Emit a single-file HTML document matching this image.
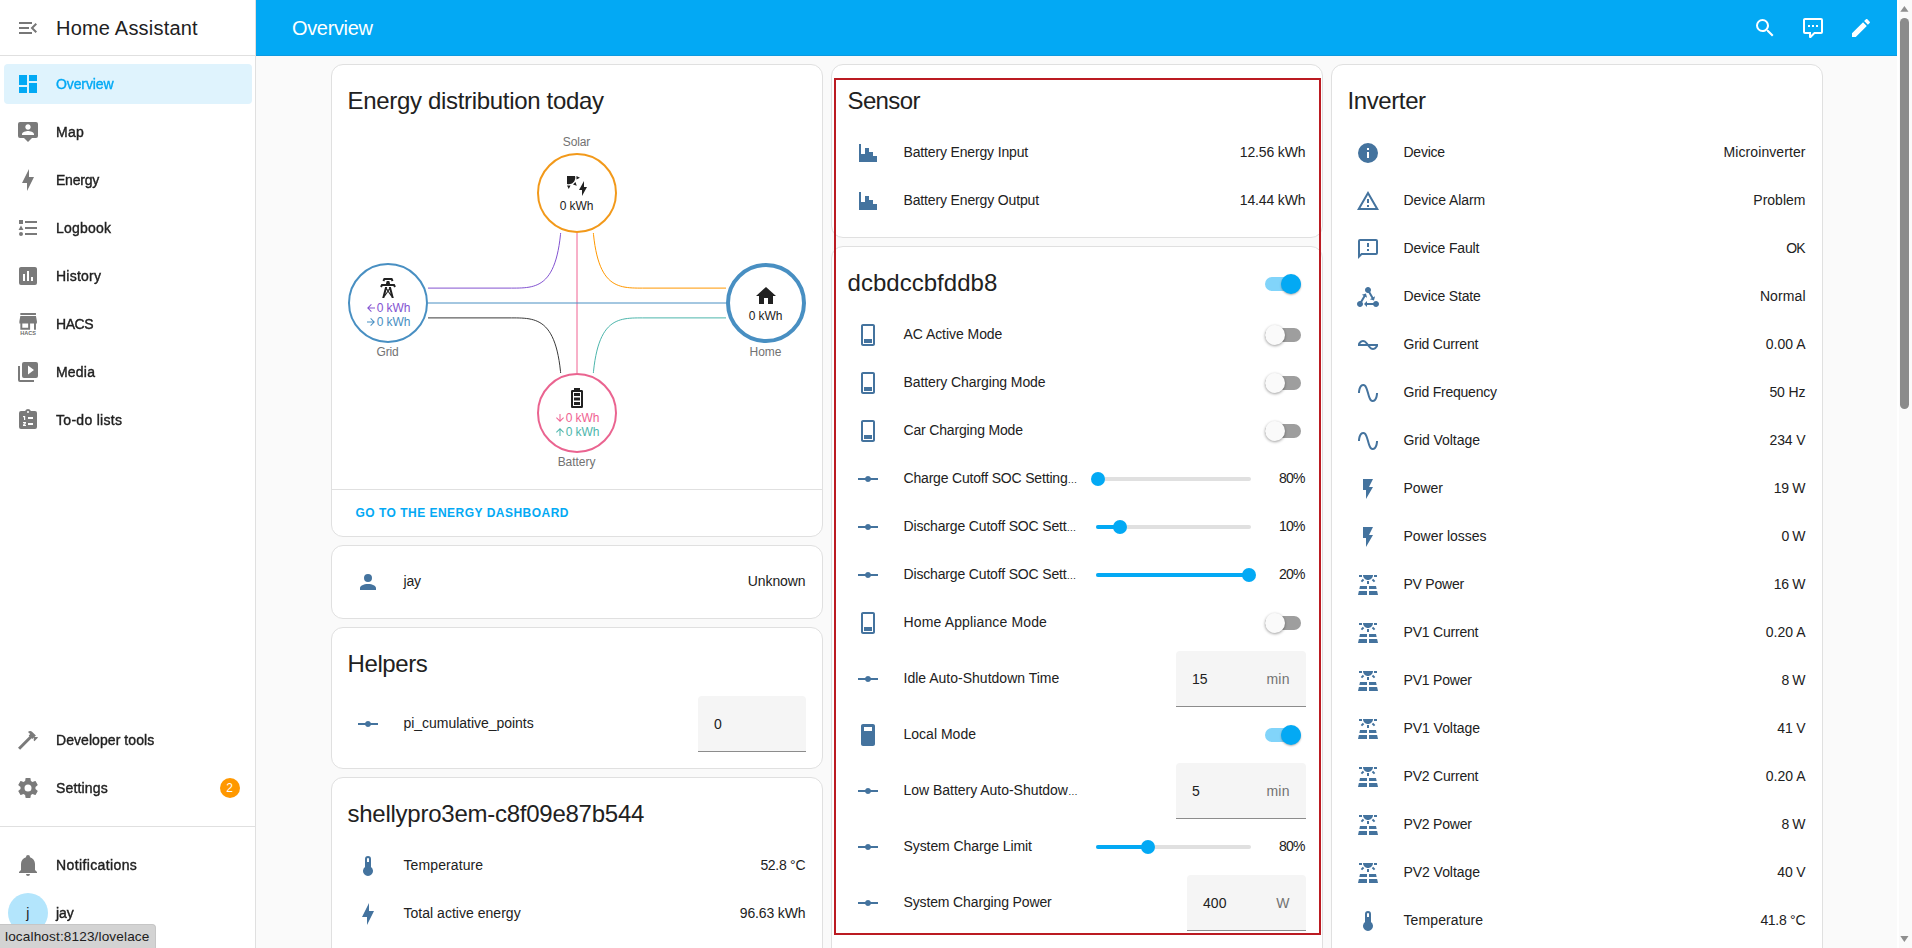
<!DOCTYPE html>
<html lang="en"><head><meta charset="utf-8"><title>Overview – Home Assistant</title>
<style>
html,body{margin:0;padding:0;}
body{width:1912px;height:948px;overflow:hidden;position:relative;background:#fafafa;font-family:"Liberation Sans", sans-serif;}
.g{display:contents;}
.g>div:not(.g),.g>svg,.g>span{position:absolute;display:block;}
.t{white-space:pre;font-family:"Liberation Sans", sans-serif;}
</style></head><body>
<main class="g" aria-label="Overview dashboard">
<section class="g" aria-label="Column 1">
<div style="left:330.5px;top:64px;width:492px;height:473px;background:#fff;border:1px solid #e0e0e0;border-radius:12px;box-sizing:border-box;"></div>
<span class="t" style="top:85.00px;font-size:24px;line-height:32px;color:#212121;letter-spacing:-0.319px;left:347.5px;">Energy distribution today</span>
<svg style="left:427.5px;top:233px" width="298" height="140" viewBox="0 0 100 100" preserveAspectRatio="xMidYMid slice" fill="none" stroke-width="1">
<path stroke="#8353d1" vector-effect="non-scaling-stroke" d="M45,0 v15 c0,30 -7.5,30 -17,30 h-33"/>
<path stroke="#ff9800" vector-effect="non-scaling-stroke" d="M55,0 v15 c0,30 7.5,30 17,30 h33"/>
<path stroke="#f06292" vector-effect="non-scaling-stroke" d="M50,0 V100"/>
<path stroke="#488fc2" vector-effect="non-scaling-stroke" d="M0,50 H100"/>
<path stroke="#3a3a3a" vector-effect="non-scaling-stroke" d="M45,100 v-15 c0,-30 -7.5,-30 -17,-30 h-33"/>
<path stroke="#4db6ac" vector-effect="non-scaling-stroke" d="M55,100 v-15 c0,-30 7.5,-30 17,-30 h33"/>
</svg>
<span class="t" style="top:134.60px;font-size:12px;line-height:14px;color:#727272;letter-spacing:-0.138px;left:562.84px;">Solar</span>
<div style="left:536.5px;top:153px;width:80px;height:80px;border:2px solid #f2991a;border-radius:50%;box-sizing:border-box;background:#fff;"></div>
<svg style="left:564.5px;top:174.0px;" width="24" height="24" viewBox="0 0 24 24"><path fill="#212121" fill-rule="nonzero" d="M11.45,2V5.55L15,3.77L11.45,2M10.45,8L8,10.46L11.75,11.71L10.45,8M2,11.45L3.77,15L5.55,11.45H2M10,2H2V10C2.57,10.17 3.17,10.25 3.77,10.25C7.35,10.26 10.26,7.35 10.27,3.75C10.26,3.16 10.17,2.57 10,2M17,22V16H14L19,7V13H22L17,22Z"/></svg>
<span class="t" style="top:198.60px;font-size:12px;line-height:14px;color:#212121;letter-spacing:-0.103px;left:559.75px;">0 kWh</span>
<div style="left:347.5px;top:263px;width:80px;height:80px;border:2px solid #488fc2;border-radius:50%;box-sizing:border-box;background:#fff;"></div>
<svg style="left:375.5px;top:275.7px;" width="24" height="24" viewBox="0 0 24 24"><path fill="#212121" fill-rule="nonzero" d="M8.28,5.45L6.5,4.55L7.76,2H16.23L17.5,4.55L15.72,5.44L15,4H9L8.28,5.45M18.62,8H14.09L13.3,5H10.7L9.91,8H5.38L4.1,10.55L5.89,11.44L6.62,10H17.38L18.1,11.45L19.89,10.56L18.62,8M17.77,22H15.7L15.46,21.1L12,15.9L8.53,21.1L8.3,22H6.23L9.12,11H11.19L10.83,12.35L12,14.1L13.16,12.35L12.81,11H14.88L17.77,22M11.4,15L10.5,13.65L9.32,18.13L11.4,15M14.68,18.12L13.5,13.64L12.6,15L14.68,18.12Z"/></svg>
<svg style="left:364.75px;top:301.5px;" width="12" height="12" viewBox="0 0 24 24"><path fill="#8353d1" fill-rule="nonzero" d="M20,11V13H8L13.5,18.5L12.08,19.92L4.16,12L12.08,4.08L13.5,5.5L8,11H20Z"/></svg>
<span class="t" style="top:301.00px;font-size:12px;line-height:14px;color:#8353d1;letter-spacing:-0.103px;left:376.75px;">0 kWh</span>
<svg style="left:364.75px;top:315.5px;" width="12" height="12" viewBox="0 0 24 24"><path fill="#488fc2" fill-rule="nonzero" d="M4,11V13H16L10.5,18.5L11.92,19.92L19.84,12L11.92,4.08L10.5,5.5L16,11H4Z"/></svg>
<span class="t" style="top:315.00px;font-size:12px;line-height:14px;color:#488fc2;letter-spacing:-0.103px;left:376.75px;">0 kWh</span>
<span class="t" style="top:345.00px;font-size:12px;line-height:14px;color:#727272;letter-spacing:-0.217px;left:376.60px;">Grid</span>
<div style="left:725.5px;top:263px;width:80px;height:80px;border:4px solid #488fc2;border-radius:50%;box-sizing:border-box;background:#fff;"></div>
<svg style="left:753.5px;top:283.7px;" width="24" height="24" viewBox="0 0 24 24"><path fill="#212121" fill-rule="nonzero" d="M10,20V14H14V20H19V12H22L12,3L2,12H5V20H10Z"/></svg>
<span class="t" style="top:308.50px;font-size:12px;line-height:14px;color:#212121;letter-spacing:-0.103px;left:748.75px;">0 kWh</span>
<span class="t" style="top:345.00px;font-size:12px;line-height:14px;color:#727272;letter-spacing:0.024px;left:749.44px;">Home</span>
<div style="left:536.5px;top:373px;width:80px;height:80px;border:2px solid #ea6490;border-radius:50%;box-sizing:border-box;background:#fff;"></div>
<svg style="left:564.5px;top:385.7px;" width="24" height="24" viewBox="0 0 24 24"><path fill="#212121" fill-rule="nonzero" d="M16,20H8V6H16M16.67,4H15V2H9V4H7.33A1.33,1.33 0 0,0 6,5.33V20.67C6,21.4 6.6,22 7.33,22H16.67A1.33,1.33 0 0,0 18,20.67V5.33C18,4.6 17.4,4 16.67,4M15,16H9V19H15V16M15,7H9V10H15V7M15,11.5H9V14.5H15V11.5Z"/></svg>
<svg style="left:553.75px;top:411.5px;" width="12" height="12" viewBox="0 0 24 24"><path fill="#f06292" fill-rule="nonzero" d="M11,4H13V16L18.5,10.5L19.92,11.92L12,19.84L4.08,11.92L5.5,10.5L11,16V4Z"/></svg>
<span class="t" style="top:411.00px;font-size:12px;line-height:14px;color:#f06292;letter-spacing:-0.103px;left:565.75px;">0 kWh</span>
<svg style="left:553.75px;top:425.5px;" width="12" height="12" viewBox="0 0 24 24"><path fill="#4db6ac" fill-rule="nonzero" d="M13,20H11V8L5.5,13.5L4.08,12.08L12,4.16L19.92,12.08L18.5,13.5L13,8V20Z"/></svg>
<span class="t" style="top:425.00px;font-size:12px;line-height:14px;color:#4db6ac;letter-spacing:-0.103px;left:565.75px;">0 kWh</span>
<span class="t" style="top:454.50px;font-size:12px;line-height:14px;color:#727272;letter-spacing:-0.039px;left:557.63px;">Battery</span>
<div style="left:331.5px;top:489px;width:490px;height:1px;background:#e0e0e0;"></div>
<span class="t" style="top:505.00px;font-size:12px;line-height:16px;color:#03a9f4;letter-spacing:0.484px;font-weight:700;left:355.5px;">GO TO THE ENERGY DASHBOARD</span>
<div style="left:330.5px;top:545px;width:492px;height:74px;background:#fff;border:1px solid #e0e0e0;border-radius:12px;box-sizing:border-box;"></div>
<svg style="left:355.5px;top:570.0px;" width="24" height="24" viewBox="0 0 24 24"><path fill="#44739e" fill-rule="nonzero" d="M12,4A4,4 0 0,1 16,8A4,4 0 0,1 12,12A4,4 0 0,1 8,8A4,4 0 0,1 12,4M12,14C16.42,14 20,15.79 20,18V20H4V18C4,15.79 7.58,14 12,14Z"/></svg>
<span class="t" style="top:571.00px;font-size:14px;line-height:20px;color:#212121;letter-spacing:-0.137px;left:403.5px;">jay</span>
<span class="t" style="top:571.00px;font-size:14px;line-height:20px;color:#212121;letter-spacing:-0.115px;right:1106.61px;">Unknown</span>
<div style="left:330.5px;top:627px;width:492px;height:142px;background:#fff;border:1px solid #e0e0e0;border-radius:12px;box-sizing:border-box;"></div>
<span class="t" style="top:648.00px;font-size:24px;line-height:32px;color:#212121;letter-spacing:-0.401px;left:347.5px;">Helpers</span>
<svg style="left:355.5px;top:712.0px;" width="24" height="24" viewBox="0 0 24 24"><path fill="#44739e" fill-rule="nonzero" d="M2,11H9.17C9.58,9.83 10.69,9 12,9C13.31,9 14.42,9.83 14.83,11H22V13H14.83C14.42,14.17 13.31,15 12,15C10.69,15 9.58,14.17 9.17,13H2V11Z"/></svg>
<span class="t" style="top:713.00px;font-size:14px;line-height:20px;color:#212121;letter-spacing:-0.028px;left:403.5px;">pi_cumulative_points</span>
<div style="left:698px;top:696px;width:108px;height:56px;background:#f5f5f5;border-radius:4px 4px 0 0;border-bottom:1px solid #8c8c8c;box-sizing:border-box;"></div>
<span class="t" style="top:714.00px;font-size:14px;line-height:20px;color:#212121;letter-spacing:0.025px;left:714px;">0</span>
<div style="left:330.5px;top:777px;width:492px;height:200px;background:#fff;border:1px solid #e0e0e0;border-radius:12px;box-sizing:border-box;"></div>
<span class="t" style="top:798.00px;font-size:24px;line-height:32px;color:#212121;letter-spacing:-0.251px;left:347.5px;">shellypro3em-c8f09e87b544</span>
<svg style="left:355.5px;top:854.0px;" width="24" height="24" viewBox="0 0 24 24"><path fill="#44739e" fill-rule="nonzero" d="M15,13V5A3,3 0 0,0 9,5V13A5,5 0 1,0 15,13M12,4A1,1 0 0,1 13,5V8H11V5A1,1 0 0,1 12,4Z"/></svg>
<span class="t" style="top:855.00px;font-size:14px;line-height:20px;color:#212121;letter-spacing:0.101px;left:403.5px;">Temperature</span>
<span class="t" style="top:855.00px;font-size:14px;line-height:20px;color:#212121;letter-spacing:-0.287px;right:1106.79px;">52.8 °C</span>
<svg style="left:355.5px;top:902.0px;" width="24" height="24" viewBox="0 0 24 24"><path fill="#44739e" fill-rule="nonzero" d="M11,15H6L13,1V9H18L11,23V15Z"/></svg>
<span class="t" style="top:903.00px;font-size:14px;line-height:20px;color:#212121;letter-spacing:0.022px;left:403.5px;">Total active energy</span>
<span class="t" style="top:903.00px;font-size:14px;line-height:20px;color:#212121;letter-spacing:-0.160px;right:1106.66px;">96.63 kWh</span>
</section>
<section class="g" aria-label="Column 2">
<div style="left:830.5px;top:64px;width:492px;height:174px;background:#fff;border:1px solid #e0e0e0;border-radius:12px;box-sizing:border-box;"></div>
<span class="t" style="top:85.00px;font-size:24px;line-height:32px;color:#212121;letter-spacing:-0.628px;left:847.5px;">Sensor</span>
<svg style="left:855.5px;top:141.0px;" width="24" height="24" viewBox="0 0 24 24"><path fill="#44739e" fill-rule="nonzero" d="M3,3H5V13H9V7H13V11H17V15H21V21H3V3Z"/></svg>
<span class="t" style="top:142.00px;font-size:14px;line-height:20px;color:#212121;letter-spacing:-0.154px;left:903.5px;">Battery Energy Input</span>
<span class="t" style="top:142.00px;font-size:14px;line-height:20px;color:#212121;letter-spacing:-0.160px;right:606.66px;">12.56 kWh</span>
<svg style="left:855.5px;top:189.0px;" width="24" height="24" viewBox="0 0 24 24"><path fill="#44739e" fill-rule="nonzero" d="M3,3H5V13H9V7H13V11H17V15H21V21H3V3Z"/></svg>
<span class="t" style="top:190.00px;font-size:14px;line-height:20px;color:#212121;letter-spacing:-0.144px;left:903.5px;">Battery Energy Output</span>
<span class="t" style="top:190.00px;font-size:14px;line-height:20px;color:#212121;letter-spacing:-0.160px;right:606.66px;">14.44 kWh</span>
<div style="left:830.5px;top:246px;width:492px;height:720px;background:#fff;border:1px solid #e0e0e0;border-radius:12px;box-sizing:border-box;"></div>
<span class="t" style="top:267.00px;font-size:24px;line-height:32px;color:#212121;letter-spacing:0.029px;left:847.5px;">dcbdccbfddb8</span>
<div style="left:1265.0px;top:277px;width:36px;height:14px;background:#81d4fa;border-radius:7px;"></div>
<div style="left:1281.0px;top:274px;width:20px;height:20px;background:#03a9f4;border-radius:50%;box-shadow:0 1px 2px rgba(0,0,0,.3);"></div>
<svg style="left:855.5px;top:323.0px;" width="24" height="24" viewBox="0 0 24 24"><path fill="#44739e" fill-rule="nonzero" d="M7,1H17C18.1,1 19,1.9 19,3V21C19,22.1 18.1,23 17,23H7C5.9,23 5,22.1 5,21V3C5,1.9 5.9,1 7,1M7,3V21H17V3H7M8,16H16V20H8V16Z"/></svg>
<span class="t" style="top:324.00px;font-size:14px;line-height:20px;color:#212121;letter-spacing:-0.056px;left:903.5px;">AC Active Mode</span>
<div style="left:1265.0px;top:328px;width:36px;height:14px;background:#9e9e9e;border-radius:7px;"></div>
<div style="left:1265.0px;top:325px;width:20px;height:20px;background:#fafafa;border-radius:50%;box-shadow:0 1px 3px rgba(0,0,0,.4);"></div>
<svg style="left:855.5px;top:371.0px;" width="24" height="24" viewBox="0 0 24 24"><path fill="#44739e" fill-rule="nonzero" d="M7,1H17C18.1,1 19,1.9 19,3V21C19,22.1 18.1,23 17,23H7C5.9,23 5,22.1 5,21V3C5,1.9 5.9,1 7,1M7,3V21H17V3H7M8,16H16V20H8V16Z"/></svg>
<span class="t" style="top:372.00px;font-size:14px;line-height:20px;color:#212121;letter-spacing:-0.094px;left:903.5px;">Battery Charging Mode</span>
<div style="left:1265.0px;top:376px;width:36px;height:14px;background:#9e9e9e;border-radius:7px;"></div>
<div style="left:1265.0px;top:373px;width:20px;height:20px;background:#fafafa;border-radius:50%;box-shadow:0 1px 3px rgba(0,0,0,.4);"></div>
<svg style="left:855.5px;top:419.0px;" width="24" height="24" viewBox="0 0 24 24"><path fill="#44739e" fill-rule="nonzero" d="M7,1H17C18.1,1 19,1.9 19,3V21C19,22.1 18.1,23 17,23H7C5.9,23 5,22.1 5,21V3C5,1.9 5.9,1 7,1M7,3V21H17V3H7M8,16H16V20H8V16Z"/></svg>
<span class="t" style="top:420.00px;font-size:14px;line-height:20px;color:#212121;letter-spacing:-0.168px;left:903.5px;">Car Charging Mode</span>
<div style="left:1265.0px;top:424px;width:36px;height:14px;background:#9e9e9e;border-radius:7px;"></div>
<div style="left:1265.0px;top:421px;width:20px;height:20px;background:#fafafa;border-radius:50%;box-shadow:0 1px 3px rgba(0,0,0,.4);"></div>
<svg style="left:855.5px;top:467.0px;" width="24" height="24" viewBox="0 0 24 24"><path fill="#44739e" fill-rule="nonzero" d="M2,11H9.17C9.58,9.83 10.69,9 12,9C13.31,9 14.42,9.83 14.83,11H22V13H14.83C14.42,14.17 13.31,15 12,15C10.69,15 9.58,14.17 9.17,13H2V11Z"/></svg>
<span class="t" style="top:468.00px;font-size:14px;line-height:20px;color:#212121;letter-spacing:-0.184px;left:903.5px;">Charge Cutoff SOC Setting<span style="letter-spacing:0;font-size:9.8px">…</span></span>
<div style="left:1096px;top:477px;width:155px;height:4px;background:#e0e0e0;border-radius:2px;"></div>
<div style="left:1091.0px;top:472px;width:14px;height:14px;background:#03a9f4;border-radius:50%;"></div>
<span class="t" style="top:468.00px;font-size:14px;line-height:20px;color:#212121;letter-spacing:-0.728px;right:607.23px;">80%</span>
<svg style="left:855.5px;top:515.0px;" width="24" height="24" viewBox="0 0 24 24"><path fill="#44739e" fill-rule="nonzero" d="M2,11H9.17C9.58,9.83 10.69,9 12,9C13.31,9 14.42,9.83 14.83,11H22V13H14.83C14.42,14.17 13.31,15 12,15C10.69,15 9.58,14.17 9.17,13H2V11Z"/></svg>
<span class="t" style="top:516.00px;font-size:14px;line-height:20px;color:#212121;letter-spacing:-0.160px;left:903.5px;">Discharge Cutoff SOC Sett<span style="letter-spacing:0;font-size:9.8px">…</span></span>
<div style="left:1096px;top:525px;width:155px;height:4px;background:#e0e0e0;border-radius:2px;"></div>
<div style="left:1096px;top:525px;width:24.12149999999997px;height:4px;background:#03a9f4;border-radius:2px;"></div>
<div style="left:1113.1215px;top:520px;width:14px;height:14px;background:#03a9f4;border-radius:50%;"></div>
<span class="t" style="top:516.00px;font-size:14px;line-height:20px;color:#212121;letter-spacing:-0.728px;right:607.23px;">10%</span>
<svg style="left:855.5px;top:563.0px;" width="24" height="24" viewBox="0 0 24 24"><path fill="#44739e" fill-rule="nonzero" d="M2,11H9.17C9.58,9.83 10.69,9 12,9C13.31,9 14.42,9.83 14.83,11H22V13H14.83C14.42,14.17 13.31,15 12,15C10.69,15 9.58,14.17 9.17,13H2V11Z"/></svg>
<span class="t" style="top:564.00px;font-size:14px;line-height:20px;color:#212121;letter-spacing:-0.160px;left:903.5px;">Discharge Cutoff SOC Sett<span style="letter-spacing:0;font-size:9.8px">…</span></span>
<div style="left:1096px;top:573px;width:155px;height:4px;background:#e0e0e0;border-radius:2px;"></div>
<div style="left:1096px;top:573px;width:153.0px;height:4px;background:#03a9f4;border-radius:2px;"></div>
<div style="left:1242.0px;top:568px;width:14px;height:14px;background:#03a9f4;border-radius:50%;"></div>
<span class="t" style="top:564.00px;font-size:14px;line-height:20px;color:#212121;letter-spacing:-0.728px;right:607.23px;">20%</span>
<svg style="left:855.5px;top:611.0px;" width="24" height="24" viewBox="0 0 24 24"><path fill="#44739e" fill-rule="nonzero" d="M7,1H17C18.1,1 19,1.9 19,3V21C19,22.1 18.1,23 17,23H7C5.9,23 5,22.1 5,21V3C5,1.9 5.9,1 7,1M7,3V21H17V3H7M8,16H16V20H8V16Z"/></svg>
<span class="t" style="top:612.00px;font-size:14px;line-height:20px;color:#212121;letter-spacing:0.138px;left:903.5px;">Home Appliance Mode</span>
<div style="left:1265.0px;top:616px;width:36px;height:14px;background:#9e9e9e;border-radius:7px;"></div>
<div style="left:1265.0px;top:613px;width:20px;height:20px;background:#fafafa;border-radius:50%;box-shadow:0 1px 3px rgba(0,0,0,.4);"></div>
<svg style="left:855.5px;top:667.0px;" width="24" height="24" viewBox="0 0 24 24"><path fill="#44739e" fill-rule="nonzero" d="M2,11H9.17C9.58,9.83 10.69,9 12,9C13.31,9 14.42,9.83 14.83,11H22V13H14.83C14.42,14.17 13.31,15 12,15C10.69,15 9.58,14.17 9.17,13H2V11Z"/></svg>
<span class="t" style="top:668.00px;font-size:14px;line-height:20px;color:#212121;letter-spacing:0.007px;left:903.5px;">Idle Auto-Shutdown Time</span>
<div style="left:1176px;top:651px;width:130px;height:56px;background:#f5f5f5;border-radius:4px 4px 0 0;border-bottom:1px solid #8c8c8c;box-sizing:border-box;"></div>
<span class="t" style="top:669.00px;font-size:14px;line-height:20px;color:#212121;letter-spacing:0.033px;left:1192px;">15</span>
<span class="t" style="top:669.00px;font-size:14px;line-height:20px;color:#727272;letter-spacing:0.238px;right:622.26px;">min</span>
<svg style="left:855.5px;top:723.0px;" width="24" height="24" viewBox="0 0 24 24"><path fill="#44739e" fill-rule="nonzero" d="M7,1H17C18.1,1 19,1.9 19,3V21C19,22.1 18.1,23 17,23H7C5.9,23 5,22.1 5,21V3C5,1.9 5.9,1 7,1M8,4V8H16V4H8Z"/></svg>
<span class="t" style="top:724.00px;font-size:14px;line-height:20px;color:#212121;letter-spacing:0.009px;left:903.5px;">Local Mode</span>
<div style="left:1265.0px;top:728px;width:36px;height:14px;background:#81d4fa;border-radius:7px;"></div>
<div style="left:1281.0px;top:725px;width:20px;height:20px;background:#03a9f4;border-radius:50%;box-shadow:0 1px 2px rgba(0,0,0,.3);"></div>
<svg style="left:855.5px;top:779.0px;" width="24" height="24" viewBox="0 0 24 24"><path fill="#44739e" fill-rule="nonzero" d="M2,11H9.17C9.58,9.83 10.69,9 12,9C13.31,9 14.42,9.83 14.83,11H22V13H14.83C14.42,14.17 13.31,15 12,15C10.69,15 9.58,14.17 9.17,13H2V11Z"/></svg>
<span class="t" style="top:780.00px;font-size:14px;line-height:20px;color:#212121;letter-spacing:-0.025px;left:903.5px;">Low Battery Auto-Shutdow<span style="letter-spacing:0;font-size:9.8px">…</span></span>
<div style="left:1176px;top:763px;width:130px;height:56px;background:#f5f5f5;border-radius:4px 4px 0 0;border-bottom:1px solid #8c8c8c;box-sizing:border-box;"></div>
<span class="t" style="top:781.00px;font-size:14px;line-height:20px;color:#212121;letter-spacing:0.025px;left:1192px;">5</span>
<span class="t" style="top:781.00px;font-size:14px;line-height:20px;color:#727272;letter-spacing:0.238px;right:622.26px;">min</span>
<svg style="left:855.5px;top:835.0px;" width="24" height="24" viewBox="0 0 24 24"><path fill="#44739e" fill-rule="nonzero" d="M2,11H9.17C9.58,9.83 10.69,9 12,9C13.31,9 14.42,9.83 14.83,11H22V13H14.83C14.42,14.17 13.31,15 12,15C10.69,15 9.58,14.17 9.17,13H2V11Z"/></svg>
<span class="t" style="top:836.00px;font-size:14px;line-height:20px;color:#212121;letter-spacing:-0.085px;left:903.5px;">System Charge Limit</span>
<div style="left:1096px;top:845px;width:155px;height:4px;background:#e0e0e0;border-radius:2px;"></div>
<div style="left:1096px;top:845px;width:51.82999999999993px;height:4px;background:#03a9f4;border-radius:2px;"></div>
<div style="left:1140.83px;top:840px;width:14px;height:14px;background:#03a9f4;border-radius:50%;"></div>
<span class="t" style="top:836.00px;font-size:14px;line-height:20px;color:#212121;letter-spacing:-0.728px;right:607.23px;">80%</span>
<svg style="left:855.5px;top:891.0px;" width="24" height="24" viewBox="0 0 24 24"><path fill="#44739e" fill-rule="nonzero" d="M2,11H9.17C9.58,9.83 10.69,9 12,9C13.31,9 14.42,9.83 14.83,11H22V13H14.83C14.42,14.17 13.31,15 12,15C10.69,15 9.58,14.17 9.17,13H2V11Z"/></svg>
<span class="t" style="top:892.00px;font-size:14px;line-height:20px;color:#212121;letter-spacing:-0.136px;left:903.5px;">System Charging Power</span>
<div style="left:1187px;top:875px;width:119px;height:56px;background:#f5f5f5;border-radius:4px 4px 0 0;border-bottom:1px solid #8c8c8c;box-sizing:border-box;"></div>
<span class="t" style="top:893.00px;font-size:14px;line-height:20px;color:#212121;letter-spacing:0.036px;left:1203px;">400</span>
<span class="t" style="top:893.00px;font-size:14px;line-height:20px;color:#727272;letter-spacing:-0.860px;right:623.36px;">W</span>
<div style="left:834px;top:78px;width:487px;height:857px;border:2px solid #bb1b22;box-sizing:border-box;"></div>
</section>
<section class="g" aria-label="Column 3">
<div style="left:1330.5px;top:64px;width:492px;height:900px;background:#fff;border:1px solid #e0e0e0;border-radius:12px;box-sizing:border-box;"></div>
<span class="t" style="top:85.00px;font-size:24px;line-height:32px;color:#212121;letter-spacing:-0.397px;left:1347.5px;">Inverter</span>
<svg style="left:1355.5px;top:141.0px;" width="24" height="24" viewBox="0 0 24 24"><path fill="#44739e" fill-rule="nonzero" d="M13,9H11V7H13M13,17H11V11H13M12,2A10,10 0 0,0 2,12A10,10 0 0,0 12,22A10,10 0 0,0 22,12A10,10 0 0,0 12,2Z"/></svg>
<span class="t" style="top:142.00px;font-size:14px;line-height:20px;color:#212121;letter-spacing:-0.247px;left:1403.5px;">Device</span>
<span class="t" style="top:142.00px;font-size:14px;line-height:20px;color:#212121;letter-spacing:0.087px;right:106.41px;">Microinverter</span>
<svg style="left:1355.5px;top:189.0px;" width="24" height="24" viewBox="0 0 24 24"><path fill="#44739e" fill-rule="nonzero" d="M12,2L1,21H23M12,6L19.53,19H4.47M11,10V14H13V10M11,16V18H13V16"/></svg>
<span class="t" style="top:190.00px;font-size:14px;line-height:20px;color:#212121;letter-spacing:-0.062px;left:1403.5px;">Device Alarm</span>
<span class="t" style="top:190.00px;font-size:14px;line-height:20px;color:#212121;letter-spacing:0.013px;right:106.49px;">Problem</span>
<svg style="left:1355.5px;top:237.0px;" width="24" height="24" viewBox="0 0 24 24"><path fill="#44739e" fill-rule="nonzero" d="M13,10H11V6H13V10M13,12H11V14H13V12M22,4V16A2,2 0 0,1 20,18H6L2,22V4A2,2 0 0,1 4,2H20A2,2 0 0,1 22,4M20,4H4V17.2L5.2,16H20V4Z"/></svg>
<span class="t" style="top:238.00px;font-size:14px;line-height:20px;color:#212121;letter-spacing:-0.180px;left:1403.5px;">Device Fault</span>
<span class="t" style="top:238.00px;font-size:14px;line-height:20px;color:#212121;letter-spacing:-0.962px;right:107.46px;">OK</span>
<svg style="left:1355.5px;top:285.0px;" width="24" height="24" viewBox="0 0 24 24"><path fill="#44739e" fill-rule="nonzero" d="M6.27 17.05C6.72 17.58 7 18.25 7 19C7 20.66 5.66 22 4 22S1 20.66 1 19 2.34 16 4 16C4.18 16 4.36 16 4.53 16.05L7.6 10.69L5.86 9.7L9.95 8.58L11.07 12.67L9.33 11.68L6.27 17.05M20 16C18.7 16 17.6 16.84 17.18 18H11V16L8 19L11 22V20H17.18C17.6 21.16 18.7 22 20 22C21.66 22 23 20.66 23 19S21.66 16 20 16M12 8C12.18 8 12.36 8 12.53 7.95L15.6 13.31L13.86 14.3L17.95 15.42L19.07 11.33L17.33 12.32L14.27 6.95C14.72 6.42 15 5.75 15 5C15 3.34 13.66 2 12 2S9 3.34 9 5 10.34 8 12 8Z"/></svg>
<span class="t" style="top:286.00px;font-size:14px;line-height:20px;color:#212121;letter-spacing:-0.191px;left:1403.5px;">Device State</span>
<span class="t" style="top:286.00px;font-size:14px;line-height:20px;color:#212121;letter-spacing:0.105px;right:106.39px;">Normal</span>
<svg style="left:1355.5px;top:333.0px;" width="24" height="24" viewBox="0 0 24 24"><path fill="#44739e" fill-rule="nonzero" d="M12.43 11C12.28 10.84 10 7 7 7S2.32 10.18 2 11V13H11.57C11.72 13.16 14 17 17 17S21.68 13.82 22 13V11H12.43M7 9C8.17 9 9.18 9.85 10 11H4.31C4.78 10.17 5.54 9 7 9M17 15C15.83 15 14.82 14.15 14 13H19.69C19.22 13.83 18.46 15 17 15Z"/></svg>
<span class="t" style="top:334.00px;font-size:14px;line-height:20px;color:#212121;letter-spacing:-0.196px;left:1403.5px;">Grid Current</span>
<span class="t" style="top:334.00px;font-size:14px;line-height:20px;color:#212121;letter-spacing:-0.006px;right:106.51px;">0.00 A</span>
<svg style="left:1355.5px;top:381.0px;" width="24" height="24" viewBox="0 0 24 24"><path fill="#44739e" fill-rule="nonzero" d="M16.5,21C13.5,21 12.31,16.76 11.05,12.28C10.14,9.04 9,5 7.5,5C4.11,5 4,11.93 4,12H2C2,11.63 2.06,3 7.5,3C10.5,3 11.71,7.25 12.97,11.74C13.83,14.8 15,19 16.5,19C19.94,19 20.03,12.07 20.03,12H22.03C22.03,12.37 21.97,21 16.5,21Z"/></svg>
<span class="t" style="top:382.00px;font-size:14px;line-height:20px;color:#212121;letter-spacing:-0.233px;left:1403.5px;">Grid Frequency</span>
<span class="t" style="top:382.00px;font-size:14px;line-height:20px;color:#212121;letter-spacing:-0.130px;right:106.63px;">50 Hz</span>
<svg style="left:1355.5px;top:429.0px;" width="24" height="24" viewBox="0 0 24 24"><path fill="#44739e" fill-rule="nonzero" d="M16.5,21C13.5,21 12.31,16.76 11.05,12.28C10.14,9.04 9,5 7.5,5C4.11,5 4,11.93 4,12H2C2,11.63 2.06,3 7.5,3C10.5,3 11.71,7.25 12.97,11.74C13.83,14.8 15,19 16.5,19C19.94,19 20.03,12.07 20.03,12H22.03C22.03,12.37 21.97,21 16.5,21Z"/></svg>
<span class="t" style="top:430.00px;font-size:14px;line-height:20px;color:#212121;letter-spacing:-0.055px;left:1403.5px;">Grid Voltage</span>
<span class="t" style="top:430.00px;font-size:14px;line-height:20px;color:#212121;letter-spacing:-0.163px;right:106.66px;">234 V</span>
<svg style="left:1355.5px;top:477.0px;" width="24" height="24" viewBox="0 0 24 24"><path fill="#44739e" fill-rule="nonzero" d="M7,2V13H10V22L17,10H13L17,2H7Z"/></svg>
<span class="t" style="top:478.00px;font-size:14px;line-height:20px;color:#212121;letter-spacing:-0.077px;left:1403.5px;">Power</span>
<span class="t" style="top:478.00px;font-size:14px;line-height:20px;color:#212121;letter-spacing:-0.309px;right:106.81px;">19 W</span>
<svg style="left:1355.5px;top:525.0px;" width="24" height="24" viewBox="0 0 24 24"><path fill="#44739e" fill-rule="nonzero" d="M7,2V13H10V22L17,10H13L17,2H7Z"/></svg>
<span class="t" style="top:526.00px;font-size:14px;line-height:20px;color:#212121;letter-spacing:-0.022px;left:1403.5px;">Power losses</span>
<span class="t" style="top:526.00px;font-size:14px;line-height:20px;color:#212121;letter-spacing:-0.420px;right:106.92px;">0 W</span>
<svg style="left:1355.5px;top:573.0px;" width="24" height="24" viewBox="0 0 24 24"><path fill="#44739e" fill-rule="nonzero" d="M3.33 16H11V13H4L3.33 16M13 16H20.67L20 13H13V16M21.11 18H13V22H22L21.11 18M2 22H11V18H2.89L2 22M11 8H13V11H11V8M15.76 7.21L17.18 5.79L19.3 7.91L17.89 9.33L15.76 7.21M4.71 7.91L6.83 5.79L8.24 7.21L6.12 9.33L4.71 7.91M3 2H6V4H3V2M18 2H21V4H18V2M12 7C14.76 7 17 4.76 17 2H7C7 4.76 9.24 7 12 7Z"/></svg>
<span class="t" style="top:574.00px;font-size:14px;line-height:20px;color:#212121;letter-spacing:-0.231px;left:1403.5px;">PV Power</span>
<span class="t" style="top:574.00px;font-size:14px;line-height:20px;color:#212121;letter-spacing:-0.309px;right:106.81px;">16 W</span>
<svg style="left:1355.5px;top:621.0px;" width="24" height="24" viewBox="0 0 24 24"><path fill="#44739e" fill-rule="nonzero" d="M3.33 16H11V13H4L3.33 16M13 16H20.67L20 13H13V16M21.11 18H13V22H22L21.11 18M2 22H11V18H2.89L2 22M11 8H13V11H11V8M15.76 7.21L17.18 5.79L19.3 7.91L17.89 9.33L15.76 7.21M4.71 7.91L6.83 5.79L8.24 7.21L6.12 9.33L4.71 7.91M3 2H6V4H3V2M18 2H21V4H18V2M12 7C14.76 7 17 4.76 17 2H7C7 4.76 9.24 7 12 7Z"/></svg>
<span class="t" style="top:622.00px;font-size:14px;line-height:20px;color:#212121;letter-spacing:-0.212px;left:1403.5px;">PV1 Current</span>
<span class="t" style="top:622.00px;font-size:14px;line-height:20px;color:#212121;letter-spacing:-0.006px;right:106.51px;">0.20 A</span>
<svg style="left:1355.5px;top:669.0px;" width="24" height="24" viewBox="0 0 24 24"><path fill="#44739e" fill-rule="nonzero" d="M3.33 16H11V13H4L3.33 16M13 16H20.67L20 13H13V16M21.11 18H13V22H22L21.11 18M2 22H11V18H2.89L2 22M11 8H13V11H11V8M15.76 7.21L17.18 5.79L19.3 7.91L17.89 9.33L15.76 7.21M4.71 7.91L6.83 5.79L8.24 7.21L6.12 9.33L4.71 7.91M3 2H6V4H3V2M18 2H21V4H18V2M12 7C14.76 7 17 4.76 17 2H7C7 4.76 9.24 7 12 7Z"/></svg>
<span class="t" style="top:670.00px;font-size:14px;line-height:20px;color:#212121;letter-spacing:-0.203px;left:1403.5px;">PV1 Power</span>
<span class="t" style="top:670.00px;font-size:14px;line-height:20px;color:#212121;letter-spacing:-0.420px;right:106.92px;">8 W</span>
<svg style="left:1355.5px;top:717.0px;" width="24" height="24" viewBox="0 0 24 24"><path fill="#44739e" fill-rule="nonzero" d="M3.33 16H11V13H4L3.33 16M13 16H20.67L20 13H13V16M21.11 18H13V22H22L21.11 18M2 22H11V18H2.89L2 22M11 8H13V11H11V8M15.76 7.21L17.18 5.79L19.3 7.91L17.89 9.33L15.76 7.21M4.71 7.91L6.83 5.79L8.24 7.21L6.12 9.33L4.71 7.91M3 2H6V4H3V2M18 2H21V4H18V2M12 7C14.76 7 17 4.76 17 2H7C7 4.76 9.24 7 12 7Z"/></svg>
<span class="t" style="top:718.00px;font-size:14px;line-height:20px;color:#212121;letter-spacing:-0.057px;left:1403.5px;">PV1 Voltage</span>
<span class="t" style="top:718.00px;font-size:14px;line-height:20px;color:#212121;letter-spacing:-0.214px;right:106.71px;">41 V</span>
<svg style="left:1355.5px;top:765.0px;" width="24" height="24" viewBox="0 0 24 24"><path fill="#44739e" fill-rule="nonzero" d="M3.33 16H11V13H4L3.33 16M13 16H20.67L20 13H13V16M21.11 18H13V22H22L21.11 18M2 22H11V18H2.89L2 22M11 8H13V11H11V8M15.76 7.21L17.18 5.79L19.3 7.91L17.89 9.33L15.76 7.21M4.71 7.91L6.83 5.79L8.24 7.21L6.12 9.33L4.71 7.91M3 2H6V4H3V2M18 2H21V4H18V2M12 7C14.76 7 17 4.76 17 2H7C7 4.76 9.24 7 12 7Z"/></svg>
<span class="t" style="top:766.00px;font-size:14px;line-height:20px;color:#212121;letter-spacing:-0.212px;left:1403.5px;">PV2 Current</span>
<span class="t" style="top:766.00px;font-size:14px;line-height:20px;color:#212121;letter-spacing:-0.006px;right:106.51px;">0.20 A</span>
<svg style="left:1355.5px;top:813.0px;" width="24" height="24" viewBox="0 0 24 24"><path fill="#44739e" fill-rule="nonzero" d="M3.33 16H11V13H4L3.33 16M13 16H20.67L20 13H13V16M21.11 18H13V22H22L21.11 18M2 22H11V18H2.89L2 22M11 8H13V11H11V8M15.76 7.21L17.18 5.79L19.3 7.91L17.89 9.33L15.76 7.21M4.71 7.91L6.83 5.79L8.24 7.21L6.12 9.33L4.71 7.91M3 2H6V4H3V2M18 2H21V4H18V2M12 7C14.76 7 17 4.76 17 2H7C7 4.76 9.24 7 12 7Z"/></svg>
<span class="t" style="top:814.00px;font-size:14px;line-height:20px;color:#212121;letter-spacing:-0.203px;left:1403.5px;">PV2 Power</span>
<span class="t" style="top:814.00px;font-size:14px;line-height:20px;color:#212121;letter-spacing:-0.420px;right:106.92px;">8 W</span>
<svg style="left:1355.5px;top:861.0px;" width="24" height="24" viewBox="0 0 24 24"><path fill="#44739e" fill-rule="nonzero" d="M3.33 16H11V13H4L3.33 16M13 16H20.67L20 13H13V16M21.11 18H13V22H22L21.11 18M2 22H11V18H2.89L2 22M11 8H13V11H11V8M15.76 7.21L17.18 5.79L19.3 7.91L17.89 9.33L15.76 7.21M4.71 7.91L6.83 5.79L8.24 7.21L6.12 9.33L4.71 7.91M3 2H6V4H3V2M18 2H21V4H18V2M12 7C14.76 7 17 4.76 17 2H7C7 4.76 9.24 7 12 7Z"/></svg>
<span class="t" style="top:862.00px;font-size:14px;line-height:20px;color:#212121;letter-spacing:-0.057px;left:1403.5px;">PV2 Voltage</span>
<span class="t" style="top:862.00px;font-size:14px;line-height:20px;color:#212121;letter-spacing:-0.214px;right:106.71px;">40 V</span>
<svg style="left:1355.5px;top:909.0px;" width="24" height="24" viewBox="0 0 24 24"><path fill="#44739e" fill-rule="nonzero" d="M15,13V5A3,3 0 0,0 9,5V13A5,5 0 1,0 15,13M12,4A1,1 0 0,1 13,5V8H11V5A1,1 0 0,1 12,4Z"/></svg>
<span class="t" style="top:910.00px;font-size:14px;line-height:20px;color:#212121;letter-spacing:0.101px;left:1403.5px;">Temperature</span>
<span class="t" style="top:910.00px;font-size:14px;line-height:20px;color:#212121;letter-spacing:-0.287px;right:106.79px;">41.8 °C</span>
</section>
</main>
<header class="g" aria-label="Toolbar">
<div style="left:256px;top:0px;width:1641px;height:56px;background:#03a9f4;"></div>
<div style="left:256px;top:55px;width:1641px;height:1px;background:#0d9ae0;"></div>
<span class="t" style="top:16.00px;font-size:20px;line-height:24px;color:#fff;letter-spacing:-0.348px;left:292px;">Overview</span>
<svg style="left:1752.5px;top:15.7px;" width="24" height="24" viewBox="0 0 24 24"><path fill="#fff" fill-rule="nonzero" d="M9.5,3A6.5,6.5 0 0,1 16,9.5C16,11.11 15.41,12.59 14.44,13.73L14.71,14H15.5L20.5,19L19,20.5L14,15.5V14.71L13.73,14.44C12.59,15.41 11.11,16 9.5,16A6.5,6.5 0 0,1 3,9.5A6.5,6.5 0 0,1 9.5,3M9.5,5C7,5 5,7 5,9.5C5,12 7,14 9.5,14C12,14 14,12 14,9.5C14,7 12,5 9.5,5Z"/></svg>
<svg style="left:1800.5px;top:15.7px;" width="24" height="24" viewBox="0 0 24 24"><path fill="#fff" fill-rule="nonzero" d="M9,22A1,1 0 0,1 8,21V18H4A2,2 0 0,1 2,16V4C2,2.89 2.9,2 4,2H20A2,2 0 0,1 22,4V16A2,2 0 0,1 20,18H13.9L10.2,21.71C10,21.9 9.75,22 9.5,22V22H9M10,16V19.08L13.08,16H20V4H4V16H10M17,11H15V9H17V11M13,11H11V9H13V11M9,11H7V9H9V11Z"/></svg>
<svg style="left:1848.5px;top:15.7px;" width="24" height="24" viewBox="0 0 24 24"><path fill="#fff" fill-rule="nonzero" d="M20.71,7.04C21.1,6.65 21.1,6 20.71,5.63L18.37,3.29C18,2.9 17.35,2.9 16.96,3.29L15.12,5.12L18.87,8.87M3,17.25V21H6.75L17.81,9.93L14.06,6.18L3,17.25Z"/></svg>
</header>
<aside class="g" aria-label="Sidebar">
<div style="left:0px;top:0px;width:255px;height:948px;background:#fff;border-right:1px solid #e0e0e0;"></div>
<div style="left:0px;top:55px;width:255px;height:1px;background:#e0e0e0;"></div>
<svg style="left:16.0px;top:16.0px;" width="24" height="24" viewBox="0 0 24 24"><path fill="#777" fill-rule="nonzero" d="M21,15.61L19.59,17L14.58,12L19.59,7L21,8.39L17.44,12L21,15.61M3,6H16V8H3V6M3,13V11H13V13H3M3,18V16H16V18H3Z"/></svg>
<span class="t" style="top:16.00px;font-size:20px;line-height:24px;color:#212121;letter-spacing:0.207px;left:56px;">Home Assistant</span>
<div style="left:4px;top:64px;width:248px;height:40px;background:#dff3fd;border-radius:4px;"></div>
<svg style="left:16.0px;top:72.0px;" width="24" height="24" viewBox="0 0 24 24"><path fill="#03a9f4" fill-rule="nonzero" d="M13,3V9H21V3M13,21H21V11H13M3,21H11V15H3M3,13H11V3H3V13Z"/></svg>
<span class="t" style="top:74.00px;font-size:14px;line-height:20px;color:#03a9f4;letter-spacing:-0.103px;-webkit-text-stroke:0.38px #03a9f4;left:56px;will-change:transform;">Overview</span>
<svg style="left:16.0px;top:120.0px;" width="24" height="24" viewBox="0 0 24 24"><path fill="#7a7a7a" fill-rule="nonzero" d="M20,2H4A2,2 0 0,0 2,4V16A2,2 0 0,0 4,18H8L12,22L16,18H20A2,2 0 0,0 22,16V4A2,2 0 0,0 20,2M12,4.3C13.5,4.3 14.7,5.5 14.7,7C14.7,8.5 13.5,9.7 12,9.7C10.5,9.7 9.3,8.5 9.3,7C9.3,5.5 10.5,4.3 12,4.3M18,15H6V14.1C6,12.1 10,11 12,11C14,11 18,12.1 18,14.1V15Z"/></svg>
<span class="t" style="top:122.00px;font-size:14px;line-height:20px;color:#212121;letter-spacing:0.291px;-webkit-text-stroke:0.38px #212121;left:56px;will-change:transform;">Map</span>
<svg style="left:16.0px;top:168.0px;" width="24" height="24" viewBox="0 0 24 24"><path fill="#7a7a7a" fill-rule="nonzero" d="M11,15H6L13,1V9H18L11,23V15Z"/></svg>
<span class="t" style="top:170.00px;font-size:14px;line-height:20px;color:#212121;letter-spacing:-0.235px;-webkit-text-stroke:0.38px #212121;left:56px;will-change:transform;">Energy</span>
<svg style="left:16.0px;top:216.0px;" width="24" height="24" viewBox="0 0 24 24"><path fill="#7a7a7a" fill-rule="nonzero" d="M5,9.5L7.5,14H2.5L5,9.5M3,4H7V8H3V4M5,20A2,2 0 0,0 7,18A2,2 0 0,0 5,16A2,2 0 0,0 3,18A2,2 0 0,0 5,20M9,5V7H21V5H9M9,19H21V17H9V19M9,13H21V11H9V13Z"/></svg>
<span class="t" style="top:218.00px;font-size:14px;line-height:20px;color:#212121;letter-spacing:0.198px;-webkit-text-stroke:0.38px #212121;left:56px;will-change:transform;">Logbook</span>
<svg style="left:16.0px;top:264.0px;" width="24" height="24" viewBox="0 0 24 24"><path fill="#7a7a7a" fill-rule="nonzero" d="M19,3H5C3.89,3 3,3.89 3,5V19A2,2 0 0,0 5,21H19A2,2 0 0,0 21,19V5C21,3.89 20.1,3 19,3M9,17H7V10H9V17M13,17H11V7H13V17M17,17H15V13H17V17Z"/></svg>
<span class="t" style="top:266.00px;font-size:14px;line-height:20px;color:#212121;letter-spacing:0.232px;-webkit-text-stroke:0.38px #212121;left:56px;will-change:transform;">History</span>
<svg style="left:16px;top:312px" width="24" height="24" viewBox="0 0 24 24"><path fill="#7a7a7a" transform="translate(0.45,-3.3) scale(0.975,1.055)" d="M12,18H6V14H12M21,14V12L20,7H4L3,12V14H4V20H14V14H18V20H20V14M20,4H4V6H20V4Z"/><text x="4.3" y="23.4" font-family="Liberation Sans, sans-serif" font-size="6" font-weight="700" textLength="15.7" lengthAdjust="spacingAndGlyphs" fill="#6a6a6a">HACS</text></svg>
<span class="t" style="top:314.00px;font-size:14px;line-height:20px;color:#212121;letter-spacing:-0.457px;-webkit-text-stroke:0.38px #212121;left:56px;will-change:transform;">HACS</span>
<svg style="left:16.0px;top:360.0px;" width="24" height="24" viewBox="0 0 24 24"><path fill="#7a7a7a" fill-rule="nonzero" d="M4,6H2V20A2,2 0 0,0 4,22H18V20H4V6M20,2H8A2,2 0 0,0 6,4V16A2,2 0 0,0 8,18H20A2,2 0 0,0 22,16V4A2,2 0 0,0 20,2M12,14.5V5.5L18,10L12,14.5Z"/></svg>
<span class="t" style="top:362.00px;font-size:14px;line-height:20px;color:#212121;letter-spacing:0.197px;-webkit-text-stroke:0.38px #212121;left:56px;will-change:transform;">Media</span>
<svg style="left:16.0px;top:408.0px;" width="24" height="24" viewBox="0 0 24 24"><path fill="#7a7a7a" fill-rule="evenodd" d="M19,3H14.82C14.4,1.84 13.3,1 12,1C10.7,1 9.6,1.84 9.18,3H5A2,2 0 0,0 3,5V19A2,2 0 0,0 5,21H19A2,2 0 0,0 21,19V5A2,2 0 0,0 19,3M12,3A1,1 0 0,1 13,4A1,1 0 0,1 12,5A1,1 0 0,1 11,4A1,1 0 0,1 12,3M7,8H9.2V12H8V9.2H7ZM7,14H10V15.2L8.4,16.8H10V18H7V16.8L8.6,15.2H7ZM12,9H17V11H12ZM12,15H17V17H12Z"/></svg>
<span class="t" style="top:410.00px;font-size:14px;line-height:20px;color:#212121;letter-spacing:0.300px;-webkit-text-stroke:0.38px #212121;left:56px;will-change:transform;">To-do lists</span>
<svg style="left:16.0px;top:728.0px;" width="24" height="24" viewBox="0 0 24 24"><path fill="#7a7a7a" fill-rule="nonzero" d="M2,19.63L13.43,8.2L12.72,7.5L14.14,6.07L12,3.89C13.2,2.7 15.09,2.7 16.27,3.89L19.87,7.5L18.45,8.91H21.29L22,9.62L18.45,13.21L17.74,12.5V9.62L16.27,11.04L15.56,10.33L4.13,21.76L2,19.63Z"/></svg>
<span class="t" style="top:730.00px;font-size:14px;line-height:20px;color:#212121;letter-spacing:0.065px;-webkit-text-stroke:0.38px #212121;left:56px;will-change:transform;">Developer tools</span>
<svg style="left:16.0px;top:776.0px;" width="24" height="24" viewBox="0 0 24 24"><path fill="#7a7a7a" fill-rule="nonzero" d="M12,15.5A3.5,3.5 0 0,1 8.5,12A3.5,3.5 0 0,1 12,8.5A3.5,3.5 0 0,1 15.5,12A3.5,3.5 0 0,1 12,15.5M19.43,12.97C19.47,12.65 19.5,12.33 19.5,12C19.5,11.67 19.47,11.34 19.43,11L21.54,9.37C21.73,9.22 21.78,8.95 21.66,8.73L19.66,5.27C19.54,5.05 19.27,4.96 19.05,5.05L16.56,6.05C16.04,5.66 15.5,5.32 14.87,5.07L14.5,2.42C14.46,2.18 14.25,2 14,2H10C9.75,2 9.54,2.18 9.5,2.42L9.13,5.07C8.5,5.32 7.96,5.66 7.44,6.05L4.95,5.05C4.73,4.96 4.46,5.05 4.34,5.27L2.34,8.73C2.21,8.95 2.27,9.22 2.46,9.37L4.57,11C4.53,11.34 4.5,11.67 4.5,12C4.5,12.33 4.53,12.65 4.57,12.97L2.46,14.63C2.27,14.78 2.21,15.05 2.34,15.27L4.34,18.73C4.46,18.95 4.73,19.03 4.95,18.95L7.44,17.94C7.96,18.34 8.5,18.68 9.13,18.93L9.5,21.58C9.54,21.82 9.75,22 10,22H14C14.25,22 14.46,21.82 14.5,21.58L14.87,18.93C15.5,18.67 16.04,18.34 16.56,17.94L19.05,18.95C19.27,19.03 19.54,18.95 19.66,18.73L21.66,15.27C21.78,15.05 21.73,14.78 21.54,14.63L19.43,12.97Z"/></svg>
<span class="t" style="top:778.00px;font-size:14px;line-height:20px;color:#212121;letter-spacing:0.155px;-webkit-text-stroke:0.38px #212121;left:56px;will-change:transform;">Settings</span>
<div style="left:219.5px;top:778px;width:20px;height:20px;background:#ff9800;border-radius:50%;"></div>
<span class="t" style="top:781.00px;font-size:12px;line-height:14px;color:#fff;letter-spacing:0.017px;left:226.25px;">2</span>
<div style="left:0px;top:826px;width:255px;height:1px;background:#e0e0e0;"></div>
<svg style="left:16.0px;top:853.0px;" width="24" height="24" viewBox="0 0 24 24"><path fill="#7a7a7a" fill-rule="nonzero" d="M21,19V20H3V19L5,17V11C5,7.9 7.03,5.17 10,4.29C10,4.19 10,4.1 10,4A2,2 0 0,1 12,2A2,2 0 0,1 14,4C14,4.1 14,4.19 14,4.29C16.97,5.17 19,7.9 19,11V17L21,19M14,21A2,2 0 0,1 12,23A2,2 0 0,1 10,21"/></svg>
<span class="t" style="top:855.00px;font-size:14px;line-height:20px;color:#212121;letter-spacing:0.382px;-webkit-text-stroke:0.38px #212121;left:56px;will-change:transform;">Notifications</span>
<div style="left:8px;top:892.5px;width:40px;height:40px;background:#b3e5fc;border-radius:50%;"></div>
<span class="t" style="top:903.00px;font-size:14px;line-height:20px;color:#212121;letter-spacing:0.201px;left:26.34px;">j</span>
<span class="t" style="top:903.00px;font-size:14px;line-height:20px;color:#212121;letter-spacing:-0.020px;-webkit-text-stroke:0.38px #212121;left:56px;will-change:transform;">jay</span>
<div style="left:0px;top:923.5px;width:155.5px;height:25px;background:#d3d3d3;border-top-right-radius:4px;border-top:1px solid #c6c6c6;border-right:1px solid #c6c6c6;box-sizing:border-box;"></div>
<span class="t" style="top:928.50px;font-size:13.6px;line-height:16px;color:#202020;letter-spacing:0.138px;left:5px;">localhost:8123/lovelace</span>
</aside>
<div class="g" aria-label="Scrollbar">
<div style="left:1897px;top:0px;width:15px;height:948px;background:#fafafa;border-left:2px solid #fff;box-sizing:border-box;"></div>
<div style="left:1900px;top:18px;width:9px;height:391px;background:#8b8b8b;border-radius:4.5px;"></div>
<svg style="left:1897px;top:0" width="15" height="17" viewBox="0 0 15 17"><path fill="#8f8f8f" d="M3.3,11.8 L7.4,5.9 L11.5,11.8Z"/></svg>
<svg style="left:1897px;top:931px" width="15" height="17" viewBox="0 0 15 17"><path fill="#8f8f8f" d="M3.3,5.1 L7.4,10.9 L11.5,5.1Z"/></svg>
</div>
</body></html>
